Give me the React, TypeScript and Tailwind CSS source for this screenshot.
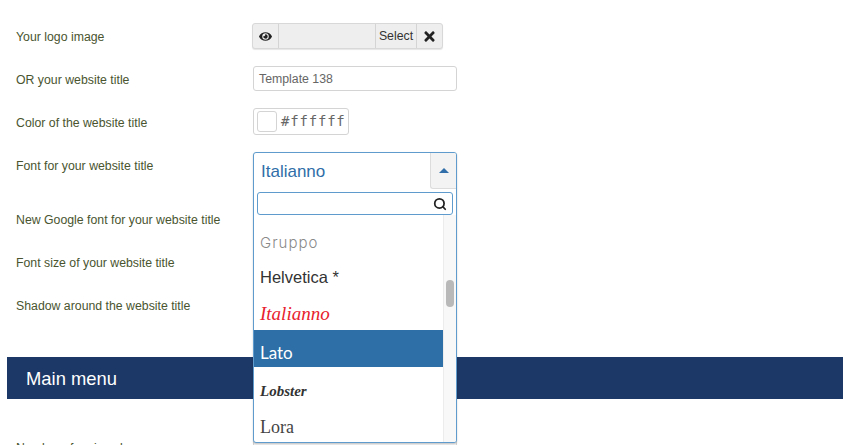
import React from "react";
import { Search } from "lucide-react";
import { FaEye, FaTimes } from "react-icons/fa";

const sans = { fontFamily: '"Liberation Sans", Arial, sans-serif' };

function Label({ children }: { children: React.ReactNode }) {
  return (
    <div className="w-[237px] shrink-0 text-[12.3px] leading-[28px] text-[#4a5530]">{children}</div>
  );
}

function Dropdown() {
  return (
    <div className="absolute left-0 top-0 z-10 h-[291px] w-[204px] rounded-[3px] border border-[#5f9ccd] bg-white overflow-hidden shadow-[0_1px_2px_rgba(0,0,0,0.2)]">
      <div className="flex h-[36px] items-stretch">
        <div className="flex-1 pl-[7px] pt-[7px] text-[17px] leading-[24px] text-[#2f6ea8]">Italianno</div>
        <div className="flex w-[26px] items-center justify-center rounded-bl-[3px] border-b border-l border-[#dcdcdc] bg-[#f3f3f3]">
          <div className="h-0 w-0 border-x-[5px] border-b-[5px] border-x-transparent border-b-[#2f6ea8]" />
        </div>
      </div>
      <div className="mx-[3px] mt-[3px] flex h-[23px] items-center justify-end rounded-[3px] border border-[#5f9ccd] bg-white pr-[5px]">
        <Search size={14} strokeWidth={3} className="text-[#222]" />
      </div>
      <div className="flex h-[227px]">
        <div className="min-w-0 flex-1 overflow-hidden">
          <div className="flex h-[41px] items-end pb-[3px] pl-[6px] text-[15px] leading-[20px] tracking-[1px] text-[#8a8a8a]" style={{ fontFamily: '"Inter", sans-serif', fontWeight: 300 }}>Gruppo</div>
          <div className="flex h-[36px] items-center pl-[6px] pt-[6px] text-[16.5px] text-[#333]">Helvetica *</div>
          <div className="flex h-[38px] items-center pl-[6px] pt-[6px] text-[19px] italic text-[#e8212e]" style={{ fontFamily: '"Liberation Serif", serif' }}>Italianno</div>
          <div className="flex h-[37px] items-center bg-[#2f6fa8] pl-[6px] pt-[8px] text-[17px] text-white" style={{ fontFamily: 'Lato, sans-serif' }}>Lato</div>
          <div className="flex h-[38px] items-center pl-[6px] pt-[10px] text-[15px] font-bold italic text-[#333]" style={{ fontFamily: '"Liberation Serif", serif' }}>Lobster</div>
          <div className="flex h-[36px] items-center pl-[6px] pt-[8px] text-[18px] text-[#444]" style={{ fontFamily: '"Liberation Serif", serif' }}>Lora</div>
        </div>
        <div className="relative w-[13px] shrink-0 border-l border-[#ececec] bg-[#f8f8f8]">
          <div className="absolute left-[2px] top-[65px] h-[27px] w-[8px] rounded-[4px] bg-[#b9b9b9]" />
        </div>
      </div>
    </div>
  );
}

export default function App() {
  return (
    <div className="h-[445px] w-[850px] overflow-hidden bg-white pt-[23px]" style={sans}>
      <div className="flex flex-col pl-[16px]">
        <div className="flex h-[43px]">
          <Label>Your logo image</Label>
          <div className="flex h-[26px] w-[191px] -ml-[1px] rounded-[3px] border border-[#d8d8d8] bg-[#eeeeee] text-[12.3px] text-[#333] shadow-[0_1px_1px_rgba(0,0,0,0.1)]">
            <div className="flex w-[26px] items-center justify-center border-r border-[#d4d4d4]">
              <FaEye size={13} className="text-[#222]" />
            </div>
            <div className="flex-1" />
            <div className="flex w-[42px] items-center justify-center border-x border-[#d4d4d4]">Select</div>
            <div className="flex w-[25px] items-center justify-center">
              <FaTimes size={15} className="text-[#222]" />
            </div>
          </div>
        </div>
        <div className="flex h-[43px]">
          <Label>OR your website title</Label>
          <div className="flex h-[25px] w-[204px] items-center rounded-[3px] border border-[#d4d4d4] bg-white pl-[5px] pt-px text-[12.3px] text-[#666]">Template 138</div>
        </div>
        <div className="flex h-[43px]">
          <Label>Color of the website title</Label>
          <div className="-mt-[1px] flex h-[27px] w-[96px] items-center rounded-[3px] border border-[#d4d4d4] bg-white pl-[3px]">
            <div className="h-[21px] w-[20px] rounded-[3px] border border-[#d4d4d4] bg-white" />
            <span className="ml-[4px] text-[14px] tracking-[0.8px] text-[#666]" style={{ fontFamily: '"DejaVu Sans Mono", monospace' }}>#ffffff</span>
          </div>
        </div>
        <div className="flex h-[54px]">
          <Label>Font for your website title</Label>
          <div className="relative h-[40px] w-[204px]"><Dropdown /></div>
        </div>
        <div className="h-[43px]"><Label>New Google font for your website title</Label></div>
        <div className="h-[43px]"><Label>Font size of your website title</Label></div>
        <div className="h-[43px]"><Label>Shadow around the website title</Label></div>
      </div>
      <div className="mx-[7px] mt-[22px] flex h-[42px] w-[836px] items-center bg-[#1c3866] pl-[19px] pt-px text-[18.4px] text-white">Main menu</div>
      <div className="mt-[35px] flex pl-[16px]">
        <Label>Number of main columns</Label>
        <div className="mt-[5px] h-[26px] w-[204px] rounded-[3px] border border-[#d4d4d4] bg-[#f2f2f2]" />
      </div>
    </div>
  );
}
